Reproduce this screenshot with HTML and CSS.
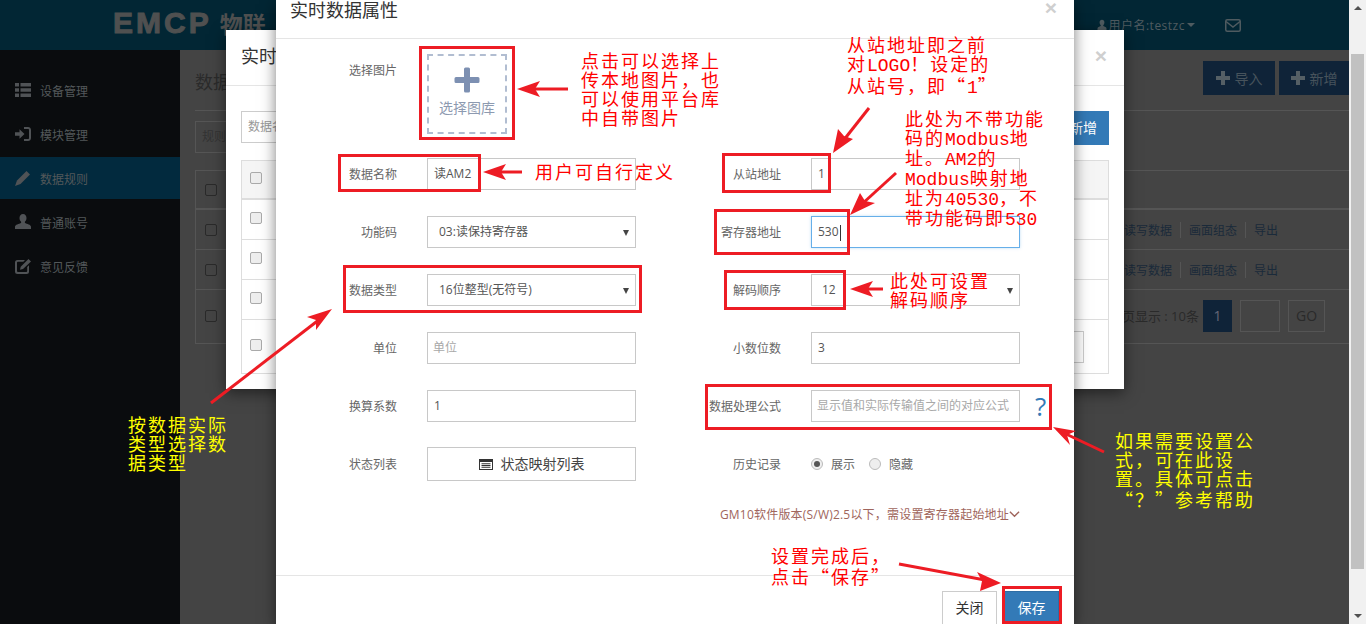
FILE: index.html
```html
<!DOCTYPE html>
<html lang="zh-CN">
<head>
  <meta charset="UTF-8">
  <meta name="viewport" content="width=device-width, initial-scale=1.0">
  <title>实时数据属性</title>
  <link rel="stylesheet" href="styles.css">
</head>
<body>

  <div class="page">
    <div class="app">
      <header class="topbar">
        <div class="logo"><span class="logo-en">EMCP</span> <span class="logo-cn">物联</span></div>
        <div class="user">
          <svg class="user-icon" viewBox="0 0 16 16"><path d="M8 1c2 0 3.200 1.500 3.200 3.600 0 1.500-.7 2.800-1.500 3.500v1.200c1.800.7 4.300 1.500 4.300 3.200V15H2v-2.500c0-1.700 2.500-2.500 4.300-3.200V8.100C5.500 7.400 4.800 6.100 4.800 4.600 4.800 2.500 6 1 8 1z"/></svg>
          <span>用户名:testzc</span><i class="caret"></i>
        </div>
        <svg class="mail" viewBox="0 0 16 13"><rect x=".75" y=".75" width="14.500" height="11.500" rx="1.500"/><path d="M1 2.500l7 5.500 7-5.500"/></svg>
      </header>
      <div class="main">
        <nav class="sidebar">
          <a class="nav-item">
            <svg viewBox="0 0 16 16"><path d="M0 1h4v3.500H0zM5.500 1H16v3.500H5.500zM0 6.200h4v3.500H0zM5.500 6.200H16v3.500H5.500zM0 11.500h4V15H0zM5.500 11.500H16V15H5.500z"/></svg>
            设备管理
          </a>
          <a class="nav-item">
            <svg viewBox="0 0 16 16"><path d="M0 6.200h4.500V3.200L9.500 8l-5 4.800v-3H0zM9 1h4c1.700 0 3 1.300 3 3v8c0 1.700-1.300 3-3 3H9v-2h4c.6 0 1-.4 1-1V4c0-.6-.4-1-1-1H9z"/></svg>
            模块管理
          </a>
          <a class="nav-item active">
            <svg viewBox="0 0 16 16"><path d="M11.500 1l3.500 3.500-9.500 9.500L0 16l2-5.500z"/></svg>
            数据规则
          </a>
          <a class="nav-item">
            <svg viewBox="0 0 16 16"><path d="M8 0c2.200 0 3.500 1.700 3.500 4 0 1.600-.7 3-1.600 3.800v1.300c2 .8 6.100 1.700 6.100 3.700V15H0v-2.200c0-2 4.100-2.900 6.100-3.700V7.800C5.200 7 4.500 5.600 4.500 4 4.500 1.700 5.800 0 8 0z"/></svg>
            普通账号
          </a>
          <a class="nav-item">
            <svg viewBox="0 0 16 16"><path d="M2.500 2H10L8.300 3.800H3a1 1 0 0 0-1 1V13a1 1 0 0 0 1 1h8.200a1 1 0 0 0 1-1V9l1.800-1.800v6.300a2.500 2.500 0 0 1-2.500 2.500h-9A2.500 2.500 0 0 1 0 13.500v-9A2.500 2.500 0 0 1 2.500 2zM13.500 1L16 3.500 8 11l-3 .7.700-3z"/></svg>
            意见反馈
          </a>
        </nav>
        <section class="content">
          <div class="content-head">
            <h2 class="clip-title">数据</h2>
            <div class="content-btns">
              <span class="dark-btn"><svg viewBox="0 0 14 14"><path d="M5 0h4v5h5v4H9v5H5V9H0V5h5z"/></svg>导入</span>
              <span class="dark-btn dark-btn-add"><svg viewBox="0 0 14 14"><path d="M5 0h4v5h5v4H9v5H5V9H0V5h5z"/></svg>新增</span>
            </div>
          </div>
          <div class="content-filter"><span class="bg-input">规则</span></div>
          <div class="bg-table">
            <div class="bg-row bg-row-head"><i class="bg-check"></i></div>
            <div class="bg-row"><i class="bg-check"></i><span class="bg-links">读写数据<em></em>画面组态<em></em>导出</span></div>
            <div class="bg-row"><i class="bg-check"></i><span class="bg-links">读写数据<em></em>画面组态<em></em>导出</span></div>
            <div class="bg-row bg-row-pager">
              <i class="bg-check"></i>
              <span class="pager">每页显示 : 10条<span class="page-num">1</span><span class="page-box"></span><span class="page-go">GO</span></span>
            </div>
          </div>
        </section>
      </div>
    </div>
    <div class="scrollbar">
      <i class="scroll-up"></i>
      <i class="scroll-thumb"></i>
      <i class="scroll-down"></i>
    </div>
  </div>

  <!-- Modal behind -->
  <div class="modal modal-back">
    <div class="modal-head">
      <h3>实时</h3>
      <span class="close">&times;</span>
    </div>
    <div class="back-body">
      <div class="back-toolbar">
        <span class="back-input">数据名</span>
        <span class="back-add">新增</span>
      </div>
      <div class="back-table">
        <div class="back-row back-row-head"><i class="check"></i></div>
        <div class="back-row"><i class="check"></i></div>
        <div class="back-row"><i class="check"></i></div>
        <div class="back-row"><i class="check"></i></div>
        <div class="back-row back-row-last"><i class="check"></i><span class="back-cell-input"></span></div>
      </div>
    </div>
  </div>

  <!-- Modal in front -->
  <div class="modal modal-front">
    <div class="front-head">
      <h3>实时数据属性</h3>
      <span class="close">&times;</span>
    </div>
    <div class="form">
      <div class="form-row-image">
        <label>选择图片</label>
        <div class="image-box">
          <svg class="image-plus" viewBox="0 0 26 26"><path d="M10 2a1.500 1.500 0 0 1 1.500-1.500h3A1.500 1.500 0 0 1 16 2v8h8a1.500 1.500 0 0 1 1.500 1.500v3A1.500 1.500 0 0 1 24 16h-8v8a1.500 1.500 0 0 1-1.500 1.500h-3A1.500 1.500 0 0 1 10 24v-8H2A1.500 1.500 0 0 1 .5 14.500v-3A1.500 1.500 0 0 1 2 10h8z"/></svg>
          <span>选择图库</span>
        </div>
      </div>
      <div class="form-grid">
        <div class="field"><label>数据名称</label><div class="input">读AM2</div></div>
        <div class="field"><label>从站地址</label><div class="input">1</div></div>
        <div class="field"><label>功能码</label><div class="input select">03:读保持寄存器</div></div>
        <div class="field"><label>寄存器地址</label><div class="input focus">530<i class="cursor"></i></div></div>
        <div class="field"><label>数据类型</label><div class="input select">16位整型(无符号)</div></div>
        <div class="field"><label>解码顺序</label><div class="input select input-order">12</div></div>
        <div class="field"><label>单位</label><div class="input placeholder">单位</div></div>
        <div class="field"><label>小数位数</label><div class="input">3</div></div>
        <div class="field"><label>换算系数</label><div class="input">1</div></div>
        <div class="field"><label>数据处理公式</label><div class="input placeholder">显示值和实际传输值之间的对应公式</div><span class="help">?</span></div>
        <div class="field">
          <label>状态列表</label>
          <div class="input map-btn">
            <svg viewBox="0 0 14 11"><path d="M0 0h14v11H0zM1 3v7h12V3zM2.500 4.200h9v1h-9zM2.500 6h9v1h-9zM2.500 7.800h9v1h-9z" fill-rule="evenodd"/></svg>
            状态映射列表
          </div>
        </div>
        <div class="field">
          <label>历史记录</label>
          <div class="radios">
            <i class="radio on"></i><span>展示</span>
            <i class="radio"></i><span>隐藏</span>
          </div>
        </div>
      </div>
      <div class="gm-link">GM10软件版本(S/W)2.5以下，需设置寄存器起始地址<svg viewBox="0 0 12 8"><path d="M1 1.500l5 5 5-5"/></svg></div>
    </div>
    <div class="front-foot">
      <span class="btn">关闭</span>
      <span class="btn btn-save">保存</span>
    </div>
  </div>

  <!-- Red boxes and arrows drawn on top of the screenshot -->
  <svg class="marks" viewBox="0 0 1366 624">
    <g class="boxes">
      <rect x="420.500" y="47.500" width="93" height="91"/>
      <rect x="339.500" y="155.500" width="140" height="35"/>
      <rect x="344.500" y="266.500" width="296" height="45"/>
      <rect x="723.500" y="154.500" width="106" height="37"/>
      <rect x="715.500" y="210.500" width="133" height="43"/>
      <rect x="725.500" y="271.500" width="119" height="37"/>
      <rect x="706.500" y="385.500" width="344" height="43"/>
      <rect x="1003.500" y="587.500" width="57" height="35"/>
    </g>
    <g class="arrows">
      <path d="M568 89H530"/><polygon points="517,89 540,81 535,89 540,97"/>
      <path d="M522 172H495"/><polygon points="483,172 506,164 501,172 506,180"/>
      <path d="M869 108L843 141"/><polygon points="833,153 838,129 844,136 853,139"/>
      <path d="M896 173L862 204"/><polygon points="850,215 860,193 865,201 875,203"/>
      <path d="M883 289H862"/><polygon points="850,289 873,281 868,289 873,297"/>
      <path d="M211 403L320 319"/><polygon points="332,309 316,330 316,320 307,317"/>
      <path d="M1104 452L1066 434"/><polygon points="1053,427 1070,445 1067,435 1076,431"/>
      <path d="M899 564L985 580"/><polygon points="1001,583 980,591 982,581 977,572"/>
    </g>
  </svg>

  <div class="note note-red note-image">点击可以选择上<br>传本地图片，也<br>可以使用平台库<br>中自带图片</div>
  <div class="note note-red note-name">用户可自行定义</div>
  <div class="note note-red note-slave">从站地址即之前<br>对<span class="latin">LOGO</span>！设定的<br>从站号，即<span class="cjk">“</span><span class="latin">1</span><span class="cjk">”</span></div>
  <div class="note note-red note-register">此处为不带功能<br>码的<span class="latin">Modbus</span>地<br>址。<span class="latin">AM2</span>的<br><span class="latin">Modbus</span>映射地<br>址为<span class="latin">40530</span>，不<br>带功能码即<span class="latin">530</span></div>
  <div class="note note-red note-order">此处可设置<br>解码顺序</div>
  <div class="note note-red note-save">设置完成后，<br>点击<span class="cjk">“</span>保存<span class="cjk">”</span></div>
  <div class="note note-yellow note-type">按数据实际<br>类型选择数<br>据类型</div>
  <div class="note note-yellow note-formula">如果需要设置公<br>式，可在此设<br>置。具体可点击<br><span class="cjk">“</span>？<span class="cjk">”</span>参考帮助</div>

</body>
</html>
```

FILE: styles.css
```css
html, body {
  margin: 0;
  padding: 0;
  height: 100%;
  overflow: hidden;
}

body {
  font-family: "Open Sans", "Noto Sans CJK SC", sans-serif;
  font-size: 12px;
  color: #555;
  background-color: #444;
}

.page {
  display: flex;
  height: 624px;
}

.app {
  flex: 1;
  min-width: 0;
  display: flex;
  flex-direction: column;
}

/* Top bar */
.topbar {
  height: 50px;
  flex: none;
  display: flex;
  align-items: center;
  background-color: #022634;
  color: #4f5b60;
  padding-left: 113px;
}

.logo {
  display: flex;
  align-items: center;
  gap: 8px;
  height: 46px;
  margin-bottom: 4px;
  color: #4f5050;
  white-space: nowrap;
}

.logo-en {
  font-family: "Liberation Sans", sans-serif;
  font-weight: bold;
  font-size: 30px;
  letter-spacing: 3px;
  line-height: 46px;
  -webkit-text-stroke: 1px #4f5050;
}

.logo-cn {
  font-size: 23px;
  font-weight: bold;
}

.user {
  display: flex;
  align-items: center;
  margin-left: auto;
  letter-spacing: .5px;
  color: #4f5b60;
}

.user-icon {
  width: 12px;
  height: 12px;
  fill: #4f5b60;
}

.caret {
  width: 0;
  height: 0;
  margin-left: 2px;
  border: 4px solid transparent;
  border-top-color: #4f5b60;
  border-bottom: 0;
}

.mail {
  width: 16px;
  height: 13px;
  margin: 0 108px 0 30px;
  fill: none;
  stroke: #4f5b60;
  stroke-width: 1.500;
}

.main {
  flex: 1;
  display: flex;
  min-height: 0;
}

/* Sidebar */
.sidebar {
  width: 180px;
  flex: none;
  padding-top: 19px;
  background-color: #0a0c0e;
}

.nav-item {
  display: flex;
  align-items: center;
  gap: 9px;
  box-sizing: border-box;
  height: 42px;
  margin-bottom: 2px;
  padding: 2px 0 0 15px;
  color: #53585a;
}

.nav-item svg {
  width: 16px;
  height: 16px;
  margin-top: -2px;
  fill: #505356;
}

.nav-item.active {
  background-color: #022a3e;
}

/* Page behind the modals */
.content {
  flex: 1;
  min-width: 0;
  padding: 11px 0 0 15px;
  color: #222;
}

.content-head {
  display: flex;
  justify-content: space-between;
  height: 49px;
  border-bottom: 1px solid #555;
}

.content-head h2 {
  margin: 7px 0 0;
  font-size: 18px;
  font-weight: normal;
  color: #2b2b2b;
}

.content-btns {
  display: flex;
  gap: 4px;
}

.dark-btn {
  display: flex;
  align-items: center;
  justify-content: center;
  gap: 5px;
  width: 72px;
  height: 34px;
  font-size: 14px;
  color: #47535c;
  background-color: #0f2338;
}

.dark-btn-add {
  width: 70px;
}

.dark-btn svg {
  width: 14px;
  height: 14px;
  fill: #555f65;
}

.content-filter {
  margin-top: 10px;
}

.bg-input {
  display: block;
  width: 200px;
  height: 30px;
  padding-left: 6px;
  line-height: 30px;
  border: 1px solid #555;
  color: #333;
}

.bg-table {
  margin-top: 17px;
  border: 1px solid #555;
  border-right: 0;
}

.bg-row {
  display: flex;
  align-items: center;
  justify-content: space-between;
  height: 39px;
  padding: 0 0 0 9px;
  border-bottom: 1px solid #555;
}

.bg-row-head {
  border-bottom-width: 2px;
  height: 37px;
}

.bg-row-pager {
  box-sizing: border-box;
  height: 53px;
  padding-bottom: 2px;
  border-bottom: 0;
}

.bg-check {
  width: 10px;
  height: 10px;
  border: 1px solid #2a2a2a;
  border-radius: 2px;
}

.bg-links {
  display: flex;
  align-items: center;
  margin-right: 71px;
  color: #1a2a3a;
}

.bg-links em {
  width: 1px;
  height: 16px;
  margin: 0 8px;
  background-color: #555;
}

.pager {
  display: flex;
  align-items: center;
  margin-right: 24px;
  font-size: 13px;
  color: #2a2a2a;
}

.page-num {
  width: 29px;
  height: 32px;
  margin-left: 4px;
  font-size: 14px;
  line-height: 32px;
  text-align: center;
  color: #667;
  background-color: #0f2338;
}

.page-box {
  width: 38px;
  height: 30px;
  margin-left: 8px;
  border: 1px solid #555;
}

.page-go {
  width: 35px;
  height: 30px;
  margin-left: 8px;
  font-size: 14px;
  line-height: 30px;
  text-align: center;
  border: 1px solid #555;
}

/* Browser scrollbar */
.scrollbar {
  width: 17px;
  flex: none;
  position: relative;
  background-color: #f1f1f1;
}

.scroll-up, .scroll-down {
  position: absolute;
  left: 5px;
  width: 0;
  height: 0;
  border: 4px solid transparent;
  border-top: 0;
  border-bottom-color: #505050;
}

.scroll-up {
  top: 6px;
}

.scroll-down {
  bottom: 6px;
  border-top: 4px solid #505050;
  border-bottom: 0;
}

.scroll-thumb {
  position: absolute;
  top: 54px;
  left: 2px;
  width: 13px;
  height: 515px;
  background-color: #c1c1c1;
}

/* Modals */
.modal {
  position: absolute;
  background-color: #fff;
  box-shadow: 0 4px 14px rgba(0, 0, 0, 0.5);
}

.modal h3 {
  margin: 0;
  font-size: 18px;
  line-height: 20px;
  font-weight: normal;
  color: #333;
}

.close {
  font-family: "Liberation Sans", sans-serif;
  font-size: 21px;
  font-weight: bold;
  line-height: 20px;
  color: #cfcfcf;
}

.modal-back {
  left: 226px;
  top: 30px;
  width: 898px;
  height: 359px;
}

.modal-head {
  display: flex;
  justify-content: space-between;
  align-items: center;
  box-sizing: border-box;
  height: 56px;
  padding: 0 17px 3px 15px;
  border-bottom: 1px solid #e5e5e5;
}

.back-body {
  padding: 25px 15px 0;
}

.back-toolbar {
  display: flex;
  justify-content: space-between;
}

.back-input {
  width: 200px;
  height: 30px;
  padding-left: 6px;
  line-height: 30px;
  border: 1px solid #ccc;
  color: #999;
}

.back-add {
  box-sizing: border-box;
  width: 73px;
  height: 34px;
  padding-right: 12px;
  line-height: 34px;
  text-align: right;
  font-size: 14px;
  color: #fff;
  background-color: #337ab7;
}

.back-table {
  margin-top: 15px;
  border: 1px solid #ddd;
  border-bottom: 0;
}

.back-row {
  display: flex;
  align-items: center;
  justify-content: space-between;
  height: 39px;
  padding: 0 24px 0 8px;
  border-bottom: 1px solid #ddd;
}

.back-row-head {
  height: 37px;
  background-color: #f5f5f5;
  border-bottom-width: 2px;
}

.back-row-last {
  height: 53px;
}

.check {
  width: 10px;
  height: 10px;
  margin-bottom: 4px;
  background-color: #eee;
  border: 1px solid #aaa;
  border-radius: 2px;
}

.back-cell-input {
  width: 100px;
  height: 30px;
  border: 1px solid #ccc;
}

.modal-front {
  left: 276px;
  top: 0;
  width: 798px;
  height: 624px;
  overflow: hidden;
  display: flex;
  flex-direction: column;
}

.front-head {
  display: flex;
  justify-content: space-between;
  align-items: flex-start;
  height: 38px;
  flex: none;
  padding: 0 17px 0 14px;
  border-bottom: 1px solid #e5e5e5;
}

.front-head .close {
  line-height: 16px;
}

.form {
  height: 536px;
  flex: none;
}

label {
  width: 121px;
  flex: none;
  text-align: right;
  color: #666;
}

.form-row-image {
  display: flex;
  height: 78px;
  margin: 15px 0 26px;
}

.form-row-image label {
  padding-top: 7px;
}

.image-box {
  width: 76px;
  height: 76px;
  flex: none;
  margin-left: 30px;
  display: flex;
  flex-direction: column;
  align-items: center;
  border: 2px dashed #b1bdd1;
  color: #8d9ab0;
  font-size: 14px;
  line-height: 20px;
}

.image-plus {
  width: 26px;
  height: 26px;
  margin: 11px 0 5px;
  fill: #7d90b2;
}

.form-grid {
  display: grid;
  grid-template-columns: 384px 384px;
  gap: 26px 0;
  grid-auto-rows: 32px;
}

.field {
  display: flex;
  align-items: center;
}

.input {
  width: 209px;
  height: 32px;
  flex: none;
  box-sizing: border-box;
  margin-left: 30px;
  padding-left: 6px;
  line-height: 30px;
  border: 1px solid #c8c8c8;
  color: #555;
  position: relative;
}

.input.select {
  padding-left: 11px;
}

.input.select::after {
  content: "";
  position: absolute;
  right: 6px;
  top: 13px;
  border: 3px solid transparent;
  border-top: 6px solid #444;
  border-bottom: 0;
}

.input.focus {
  border-color: #66afe9;
  box-shadow: 0 0 3px rgba(102, 175, 233, 0.4);
}

.cursor {
  display: inline-block;
  width: 1px;
  height: 16px;
  margin-left: 1px;
  vertical-align: middle;
  background-color: #333;
}

.input.placeholder {
  color: #a8a8a8;
  padding-left: 5px;
}

.input.input-order {
  padding-left: 10px;
}

.help {
  margin-left: 15px;
  font-size: 26px;
  line-height: 28px;
  color: #337ab7;
}

.map-btn {
  height: 34px;
  padding-left: 0;
  display: flex;
  align-items: center;
  justify-content: center;
  gap: 8px;
  font-size: 14px;
  color: #444;
}

.map-btn svg {
  width: 14px;
  height: 11px;
  fill: #333;
}

.radios {
  display: flex;
  align-items: center;
  margin-left: 30px;
  color: #666;
}

.radio {
  width: 10px;
  height: 10px;
  margin-right: 8px;
  border: 1px solid #bbb;
  border-radius: 50%;
  background-color: #eee;
  position: relative;
}

.radio.on::after {
  content: "";
  position: absolute;
  left: 2px;
  top: 2px;
  width: 6px;
  height: 6px;
  border-radius: 50%;
  background-color: #555;
}

.radios span {
  margin-right: 14px;
}

.gm-link {
  display: flex;
  align-items: center;
  justify-content: flex-end;
  margin: 25px 54px 0 0;
  letter-spacing: .2px;
  color: #a0655c;
  white-space: nowrap;
}

.gm-link svg {
  width: 11px;
  height: 8px;
  fill: none;
  stroke: #a0655c;
  stroke-width: 1.500;
}

.front-foot {
  display: flex;
  justify-content: flex-end;
  gap: 7px;
  padding: 15px 15px 0 0;
  border-top: 1px solid #e5e5e5;
}

.btn {
  width: 53px;
  height: 32px;
  font-size: 14px;
  line-height: 32px;
  text-align: center;
  border: 1px solid #ccc;
  color: #333;
}

.btn-save {
  color: #fff;
  background-color: #337ab7;
  border-color: #2e6da4;
}

/* Annotations */
.marks {
  position: absolute;
  left: 0;
  top: 0;
  width: 1366px;
  height: 624px;
}

.boxes rect {
  fill: none;
  stroke: #ed1c24;
  stroke-width: 3;
}

.arrows path {
  fill: none;
  stroke: #ed1c24;
  stroke-width: 3;
}

.arrows polygon {
  fill: #ed1c24;
}

.note {
  position: absolute;
  font-family: "Liberation Serif", "Noto Sans CJK SC", serif;
  font-size: 18px;
  letter-spacing: 2px;
  line-height: 19px;
  white-space: nowrap;
}

.note .latin {
  font-family: "Liberation Mono", monospace;
  letter-spacing: 0;
}

.note .cjk {
  font-family: "Noto Sans CJK SC", sans-serif;
}

.note-red {
  color: #f00;
}

.note-yellow {
  color: #ff0;
}

.note-image { left: 581px; top: 53px; }
.note-name { left: 535px; top: 164px; }
.note-slave { left: 847px; top: 37px; }
.note-register { left: 905px; top: 111px; }
.note-order { left: 890px; top: 273px; }
.note-save { left: 771px; top: 548px; }
.note-type { left: 128px; top: 417px; }
.note-formula { left: 1115px; top: 433px; }
```
